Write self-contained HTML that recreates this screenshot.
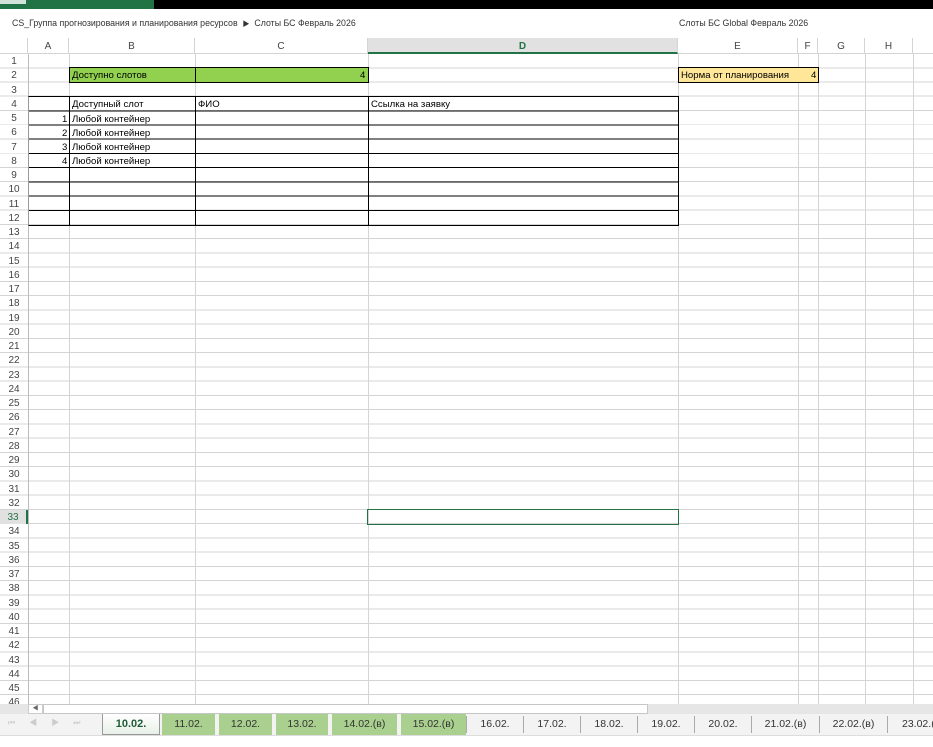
<!DOCTYPE html>
<html><head><meta charset="utf-8"><style>
*{margin:0;padding:0;box-sizing:border-box}
body{width:933px;height:747px;overflow:hidden;background:#fff;font-family:"Liberation Sans","Noto Sans CJK SC",sans-serif;position:relative;color:#222}
.a{position:absolute}
.vl{position:absolute;top:54px;height:650px;width:1px;background:#d4d4d4}
.rn{position:absolute;left:0;width:28px;text-align:center;font-size:10px;color:#444;height:14px;line-height:15px}
.t{position:absolute;font-size:9.6px;color:#000;line-height:14px;white-space:nowrap}
.ch{position:absolute;top:38px;height:16px;font-size:10px;color:#444;text-align:center;line-height:17px;border-right:1px solid #d4d4d4}
.tab{position:absolute;top:714px;height:21px;font-size:10.5px;text-align:center;line-height:20px;color:#333}
.sep{position:absolute;top:716px;width:1px;height:17px;background:#aaa}
</style></head><body>
<div class="a" style="left:0;top:0;width:933px;height:9px;background:#000"></div>
<div class="a" style="left:0;top:0;width:154px;height:9px;background:#217346"></div>
<div class="a" style="left:0;top:0;width:26px;height:4px;background:#fff;opacity:.8"></div>
<div class="a" style="left:12px;top:18px;font-size:8.8px;color:#333">CS_Группа прогнозирования и планирования ресурсов &nbsp;<span style="font-size:7px">▶</span>&nbsp; Слоты БС Февраль 2026</div>
<div class="a" style="left:679px;top:18px;font-size:8.8px;color:#333">Слоты БС Global Февраль 2026</div>
<!-- column headers -->
<div class="a" style="left:0;top:38px;width:933px;height:16px;border-bottom:1px solid #d4d4d4"></div>
<div class="ch" style="left:0;width:28px"></div>
<div class="ch" style="left:28px;width:41px">A</div>
<div class="ch" style="left:69px;width:126px">B</div>
<div class="ch" style="left:195px;width:173px">C</div>
<div class="ch" style="left:368px;width:310px;background:#e1e1e1;border-bottom:2px solid #217346;color:#217346;font-weight:bold;height:16px">D</div>
<div class="ch" style="left:678px;width:120px">E</div>
<div class="ch" style="left:798px;width:20px">F</div>
<div class="ch" style="left:818px;width:47px">G</div>
<div class="ch" style="left:865px;width:48px">H</div>
<!-- grid -->
<div class="a" style="left:0;top:54px;width:933px;height:650px;background:repeating-linear-gradient(to bottom,transparent 0,transparent 13.25px,#d4d4d4 13.25px,#d4d4d4 14.25px)"></div>
<div class="vl" style="left:28px;background:#bbb"></div>
<div class="vl" style="left:69px"></div>
<div class="vl" style="left:195px"></div>
<div class="vl" style="left:368px"></div>
<div class="vl" style="left:678px"></div>
<div class="vl" style="left:798px"></div>
<div class="vl" style="left:818px"></div>
<div class="vl" style="left:865px"></div>
<div class="vl" style="left:913px"></div>
<!-- row numbers -->
<div class="rn" style="top:54px">1</div><div class="rn" style="top:68.25px">2</div><div class="rn" style="top:82.5px">3</div><div class="rn" style="top:96.75px">4</div><div class="rn" style="top:111px">5</div><div class="rn" style="top:125.25px">6</div><div class="rn" style="top:139.5px">7</div><div class="rn" style="top:153.75px">8</div><div class="rn" style="top:168px">9</div><div class="rn" style="top:182.25px">10</div><div class="rn" style="top:196.5px">11</div><div class="rn" style="top:210.75px">12</div><div class="rn" style="top:225px">13</div><div class="rn" style="top:239.25px">14</div><div class="rn" style="top:253.5px">15</div><div class="rn" style="top:267.75px">16</div><div class="rn" style="top:282px">17</div><div class="rn" style="top:296.25px">18</div><div class="rn" style="top:310.5px">19</div><div class="rn" style="top:324.75px">20</div><div class="rn" style="top:339px">21</div><div class="rn" style="top:353.25px">22</div><div class="rn" style="top:367.5px">23</div><div class="rn" style="top:381.75px">24</div><div class="rn" style="top:396px">25</div><div class="rn" style="top:410.25px">26</div><div class="rn" style="top:424.5px">27</div><div class="rn" style="top:438.75px">28</div><div class="rn" style="top:453px">29</div><div class="rn" style="top:467.25px">30</div><div class="rn" style="top:481.5px">31</div><div class="rn" style="top:495.75px">32</div><div class="rn" style="top:510px;background:#e1e1e1;color:#217346;border-right:2px solid #217346">33</div><div class="rn" style="top:524.25px">34</div><div class="rn" style="top:538.5px">35</div><div class="rn" style="top:552.75px">36</div><div class="rn" style="top:567px">37</div><div class="rn" style="top:581.25px">38</div><div class="rn" style="top:595.5px">39</div><div class="rn" style="top:609.75px">40</div><div class="rn" style="top:624px">41</div><div class="rn" style="top:638.25px">42</div><div class="rn" style="top:652.5px">43</div><div class="rn" style="top:666.75px">44</div><div class="rn" style="top:681px">45</div><div class="rn" style="top:695.25px;height:9px;overflow:hidden">46</div>
<!-- row 2 green -->
<div class="a" style="left:69px;top:67px;width:300px;height:16px;background:#92d050;border:1px solid #000"></div>
<div class="a" style="left:195px;top:67px;width:1px;height:16px;background:#000"></div>
<div class="t" style="left:72px;top:69px">Доступно слотов</div>
<div class="t" style="left:360px;top:69px">4</div>
<div class="a" style="left:678px;top:67px;width:141px;height:16px;background:#ffe699;border:1px solid #000"></div>
<div class="t" style="left:681px;top:69px">Норма от планирования</div>
<div class="t" style="left:811px;top:69px">4</div>
<!-- table -->
<div class="a" style="left:28px;top:96px;width:651px;height:130px;border:1px solid #000;border-left-color:#999;background:repeating-linear-gradient(to bottom,transparent 0,transparent 13.25px,#000 13.25px,#000 14.25px);background-size:100% 114px;background-repeat:no-repeat"></div>
<div class="a" style="left:69px;top:96px;width:1px;height:130px;background:#000"></div>
<div class="a" style="left:195px;top:96px;width:1px;height:130px;background:#000"></div>
<div class="a" style="left:368px;top:96px;width:1px;height:130px;background:#000"></div>
<div class="t" style="left:72px;top:98px">Доступный слот</div>
<div class="t" style="left:198px;top:98px">ФИО</div>
<div class="t" style="left:371px;top:98px">Ссылка на заявку</div>
<div class="t" style="left:62px;top:112.5px">1</div><div class="t" style="left:72px;top:112.5px">Любой контейнер</div>
<div class="t" style="left:62px;top:126.5px">2</div><div class="t" style="left:72px;top:126.5px">Любой контейнер</div>
<div class="t" style="left:62px;top:141px">3</div><div class="t" style="left:72px;top:141px">Любой контейнер</div>
<div class="t" style="left:62px;top:155px">4</div><div class="t" style="left:72px;top:155px">Любой контейнер</div>
<!-- selected cell -->
<div class="a" style="left:367px;top:509px;width:312px;height:16px;border:1px solid #217346"></div>
<!-- scrollbar -->
<div class="a" style="left:0;top:704px;width:933px;height:10px;background:#e6e6e6"></div>
<div class="a" style="left:28px;top:704px;width:15px;height:10px;background:#fff;border:1px solid #ccc;font-size:6px;color:#666;text-align:center;line-height:8px">◀</div>
<div class="a" style="left:43px;top:704px;width:605px;height:10px;background:#fff;border:1px solid #c6c6c6"></div>
<!-- tabs -->
<div class="a" style="left:0;top:714px;width:933px;height:22px;background:#f3f3f3;border-bottom:1px solid #ddd"></div>
<div class="a" style="left:8px;top:717px;font-size:8px;color:#ccc;letter-spacing:14px">⏮◀▶⏭</div>
<div class="tab" style="left:102px;width:58px;background:linear-gradient(#fff,#e8f0e8);border:1px solid #999;border-top:none;color:#1f5c36;font-weight:bold;font-size:11px">10.02.</div>
<div class="tab" style="left:162px;width:53px;background:#a9d08e">11.02.</div>
<div class="tab" style="left:219px;width:53px;background:#a9d08e">12.02.</div>
<div class="tab" style="left:276px;width:52px;background:#a9d08e">13.02.</div>
<div class="tab" style="left:332px;width:65px;background:#a9d08e">14.02.(в)</div>
<div class="tab" style="left:401px;width:65px;background:#a9d08e">15.02.(в)</div>
<div class="tab" style="left:467px;width:56px">16.02.</div><div class="sep" style="left:523px"></div>
<div class="tab" style="left:524px;width:56px">17.02.</div><div class="sep" style="left:580px"></div>
<div class="tab" style="left:581px;width:56px">18.02.</div><div class="sep" style="left:637px"></div>
<div class="tab" style="left:638px;width:56px">19.02.</div><div class="sep" style="left:694px"></div>
<div class="tab" style="left:695px;width:56px">20.02.</div><div class="sep" style="left:751px"></div>
<div class="tab" style="left:752px;width:67px">21.02.(в)</div><div class="sep" style="left:819px"></div>
<div class="tab" style="left:820px;width:67px">22.02.(в)</div><div class="sep" style="left:887px"></div>
<div class="tab" style="left:888px;width:67px;text-align:left;padding-left:14px">23.02.(в)</div>
<div class="sep" style="left:466px"></div>
</body></html>
